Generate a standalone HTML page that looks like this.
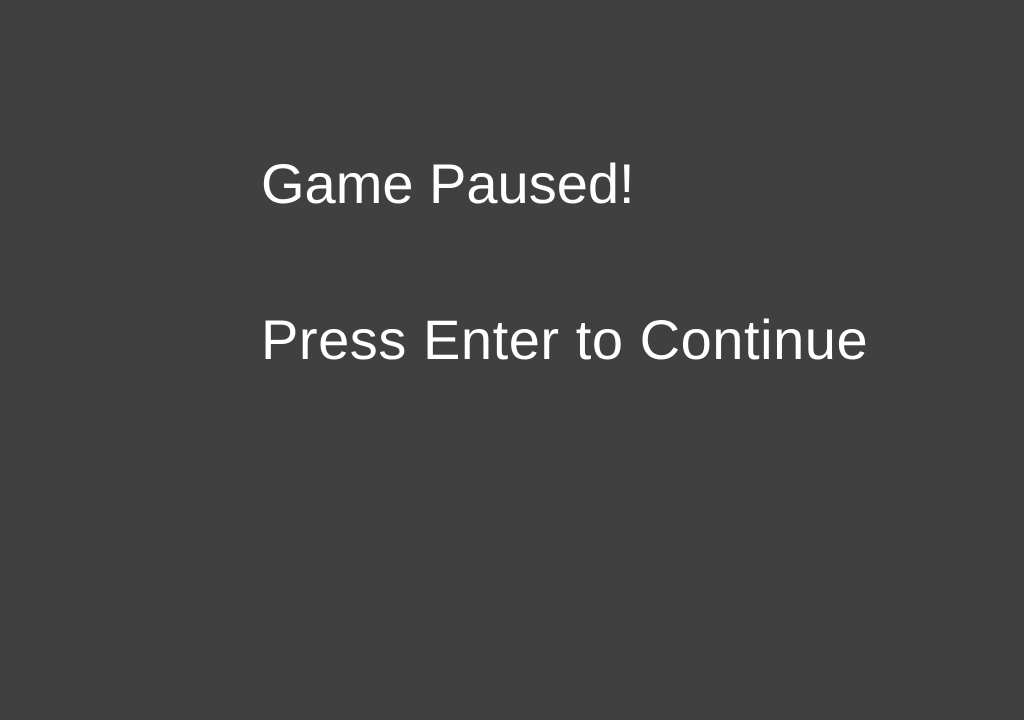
<!DOCTYPE html>
<html><head><style>
html,body{margin:0;padding:0;width:1024px;height:720px;background:#404040;overflow:hidden}
.t{position:absolute;left:261px;color:#fff;font-family:"Liberation Sans",sans-serif;font-size:56px;line-height:1;white-space:nowrap}
</style></head><body>
<div class="t" style="top:156px">Game Paused!</div>
<div class="t" style="top:312px;letter-spacing:0.55px">Press Enter to Continue</div>
</body></html>
